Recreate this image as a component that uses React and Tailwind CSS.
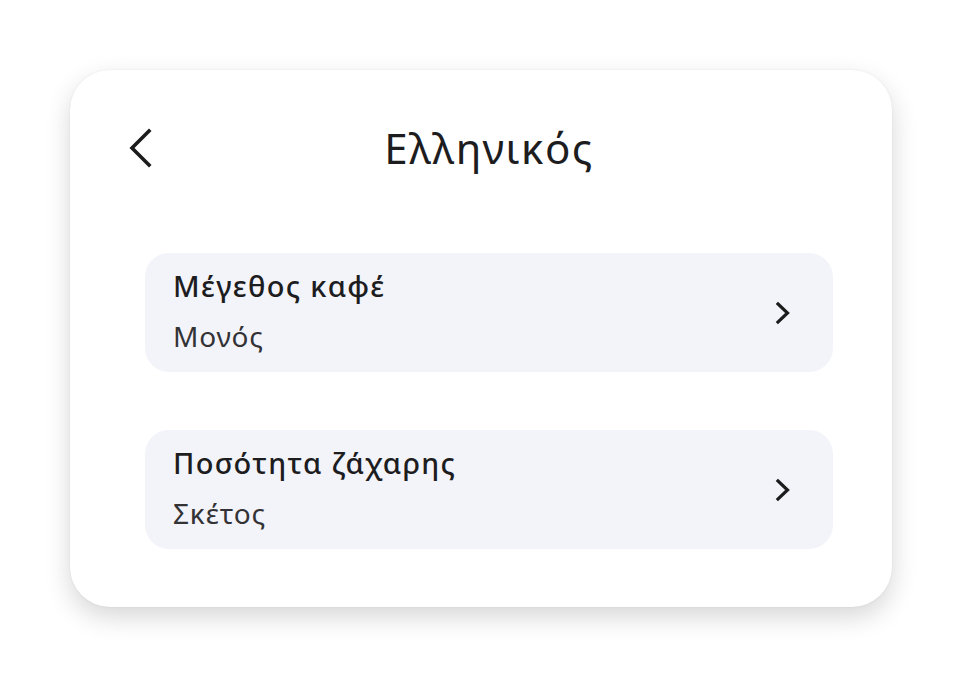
import React from 'react';

const font = { fontFamily: '"Noto Sans", "Open Sans", sans-serif' };

const Back = () => (
  <svg width="26" height="40" viewBox="0 0 26 40" fill="none">
    <path d="M22 3 L5 20 L22 37" stroke="#1c1c1c" strokeWidth="3.6" strokeLinecap="square" />
  </svg>
);

const Next = () => (
  <svg width="16" height="24" viewBox="0 0 16 24" fill="none">
    <path d="M3 3 L12.5 12 L3 21" stroke="#1c1c1c" strokeWidth="3.2" strokeLinecap="square" />
  </svg>
);

const Row = ({ title, value }) => (
  <button className="w-full h-[119px] rounded-[24px] bg-[#f3f4fa] flex items-center pl-[28px] pr-[42px] text-left">
    <div className="flex-1 flex flex-col pb-[4px]">
      <span className="text-[29px] leading-[50px] font-medium tracking-[0.045em] text-[#1d1d1f]">{title}</span>
      <span className="text-[28px] leading-[50px] tracking-[0.03em] text-[#333336]">{value}</span>
    </div>
    <Next />
  </button>
);

export default function App() {
  return (
    <div className="min-h-screen bg-white p-[70px]" style={font}>
      <div className="w-[822px] h-[537px] rounded-[40px] bg-white shadow-[0_10px_26px_rgba(0,0,0,0.16),0_0_2px_rgba(0,0,0,0.08)] flex flex-col pt-[58px] pl-[57px] pr-[59px]">
        <div className="flex items-center h-[40px]">
          <Back />
          <h1 className="flex-1 text-center text-[42px] font-normal tracking-[0.035em] text-[#1d1d1f] leading-none pr-[8px]">Ελληνικός</h1>
        </div>
        <div className="flex flex-col gap-[58px] mt-[85px] pl-[18px]">
          <Row title="Μέγεθος καφέ" value="Μονός" />
          <Row title="Ποσότητα ζάχαρης" value="Σκέτος" />
        </div>
      </div>
    </div>
  );
}
